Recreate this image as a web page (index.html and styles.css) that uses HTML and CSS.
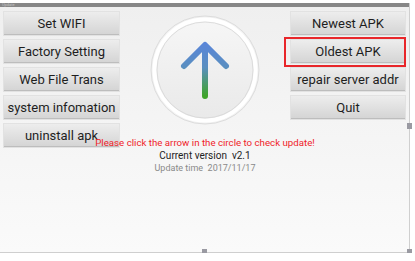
FILE: index.html
```html
<!DOCTYPE html>
<html>
<head>
  <meta charset="UTF-8" />
  <title>Update</title>
  <link rel="stylesheet" href="styles.css">
</head>
<body>

  <div class="screen">
    <div class="title-bar">Update</div>

    <div class="main">
      <div class="col">
        <button class="btn">Set WIFI</button>
        <button class="btn">Factory Setting</button>
        <button class="btn">Web File Trans</button>
        <button class="btn">system infomation</button>
        <button class="btn">uninstall apk</button>
      </div>

      <div class="center">
        <svg class="update-circle" width="110" height="110" viewBox="0 0 110 110">
          <defs>
            <linearGradient id="fill" x1="0" y1="0" x2="0" y2="1">
              <stop offset="0" stop-color="#f6f6f6" />
              <stop offset="1" stop-color="#e9e9e9" />
            </linearGradient>
            <linearGradient id="arrow" gradientUnits="userSpaceOnUse" x1="0" y1="29" x2="0" y2="81">
              <stop offset="0" stop-color="#5a86d8" />
              <stop offset="0.45" stop-color="#5a8fc0" />
              <stop offset="1" stop-color="#3fa42a" />
            </linearGradient>
          </defs>
          <circle cx="55" cy="55" r="54" fill="#f2f2f2" stroke="#dcdcdc" stroke-width="1" />
          <circle cx="55" cy="55" r="50.5" fill="url(#fill)" stroke="#ffffff" stroke-width="4" />
          <circle cx="55" cy="55" r="48" fill="none" stroke="#d6d6d6" stroke-width="0.8" />
          <path d="M55 81 L55 31 M34 51 L55 30 L76 51" fill="none" stroke="url(#arrow)" stroke-width="6" stroke-linecap="round" stroke-linejoin="round" />
        </svg>
        <div class="hint">Please click the arrow in the circle to check update!</div>
        <div class="version">Current version&nbsp;&nbsp;v2.1</div>
        <div class="update-time">Update time&nbsp;&nbsp;2017/11/17</div>
      </div>

      <div class="col">
        <button class="btn">Newest APK</button>
        <button class="btn marked">Oldest APK</button>
        <button class="btn">repair server addr</button>
        <button class="btn">Quit</button>
      </div>
    </div>

    <span class="handle handle-right"></span>
    <span class="handle handle-bottom"></span>
    <span class="handle handle-corner"></span>
  </div>

</body>
</html>
```

FILE: styles.css
```css
body { margin: 0; background: #fff; font-family: Roboto, 'Noto Sans', sans-serif; }
.screen {
  position: relative;
  width: 409px; height: 249px;
  margin-top: 3px;
  background: linear-gradient(#efefef, #fafafa);
  border-right: 1px solid #cfcfcf;
  border-bottom: 1px solid #cfcfcf;
}
.title-bar {
  height: 4px; background: #878787;
  color: #c4c4c4; font-size: 4px; line-height: 4px;
  padding-left: 2px; overflow: hidden;
}
.main {
  display: grid;
  grid-template-columns: 115px 172px 114px;
  padding: 5px 0 0 4px;
  align-items: start;
}
.col { display: flex; flex-direction: column; gap: 5px; }
.btn {
  position: relative;
  height: 23px; padding: 0;
  border: none; border-bottom: 1px solid #bdbdbd;
  background: linear-gradient(#ededed, #d5d5d5);
  box-shadow: 0 0 0 1px #e2e2e2;
  font-family: Roboto, sans-serif; font-size: 13px; color: #1e1e1e;
  line-height: 24px; white-space: nowrap;
}
.marked::after {
  content: ""; position: absolute;
  left: -7px; top: -3px; right: -1px; bottom: -5px;
  border: 2px solid #e8262a;
}
.center { position: relative; z-index: 1; display: flex; flex-direction: column; align-items: center; }
.update-circle { display: block; margin-top: 3px; }
.hint {
  margin-top: 12px; white-space: nowrap;
  font-size: 9.7px; line-height: 12px; color: #f0232a;
}
.version { font-size: 10px; line-height: 13px; color: #222; white-space: nowrap; }
.update-time { font-size: 9px; line-height: 12px; color: #8a8a8a; white-space: nowrap; }
.handle { position: absolute; width: 5px; height: 6px; background: #9a9aa2; }
.handle-right { right: -3px; top: 120px; }
.handle-bottom { left: 202px; bottom: -3px; }
.handle-corner { right: -3px; bottom: -3px; }
```
